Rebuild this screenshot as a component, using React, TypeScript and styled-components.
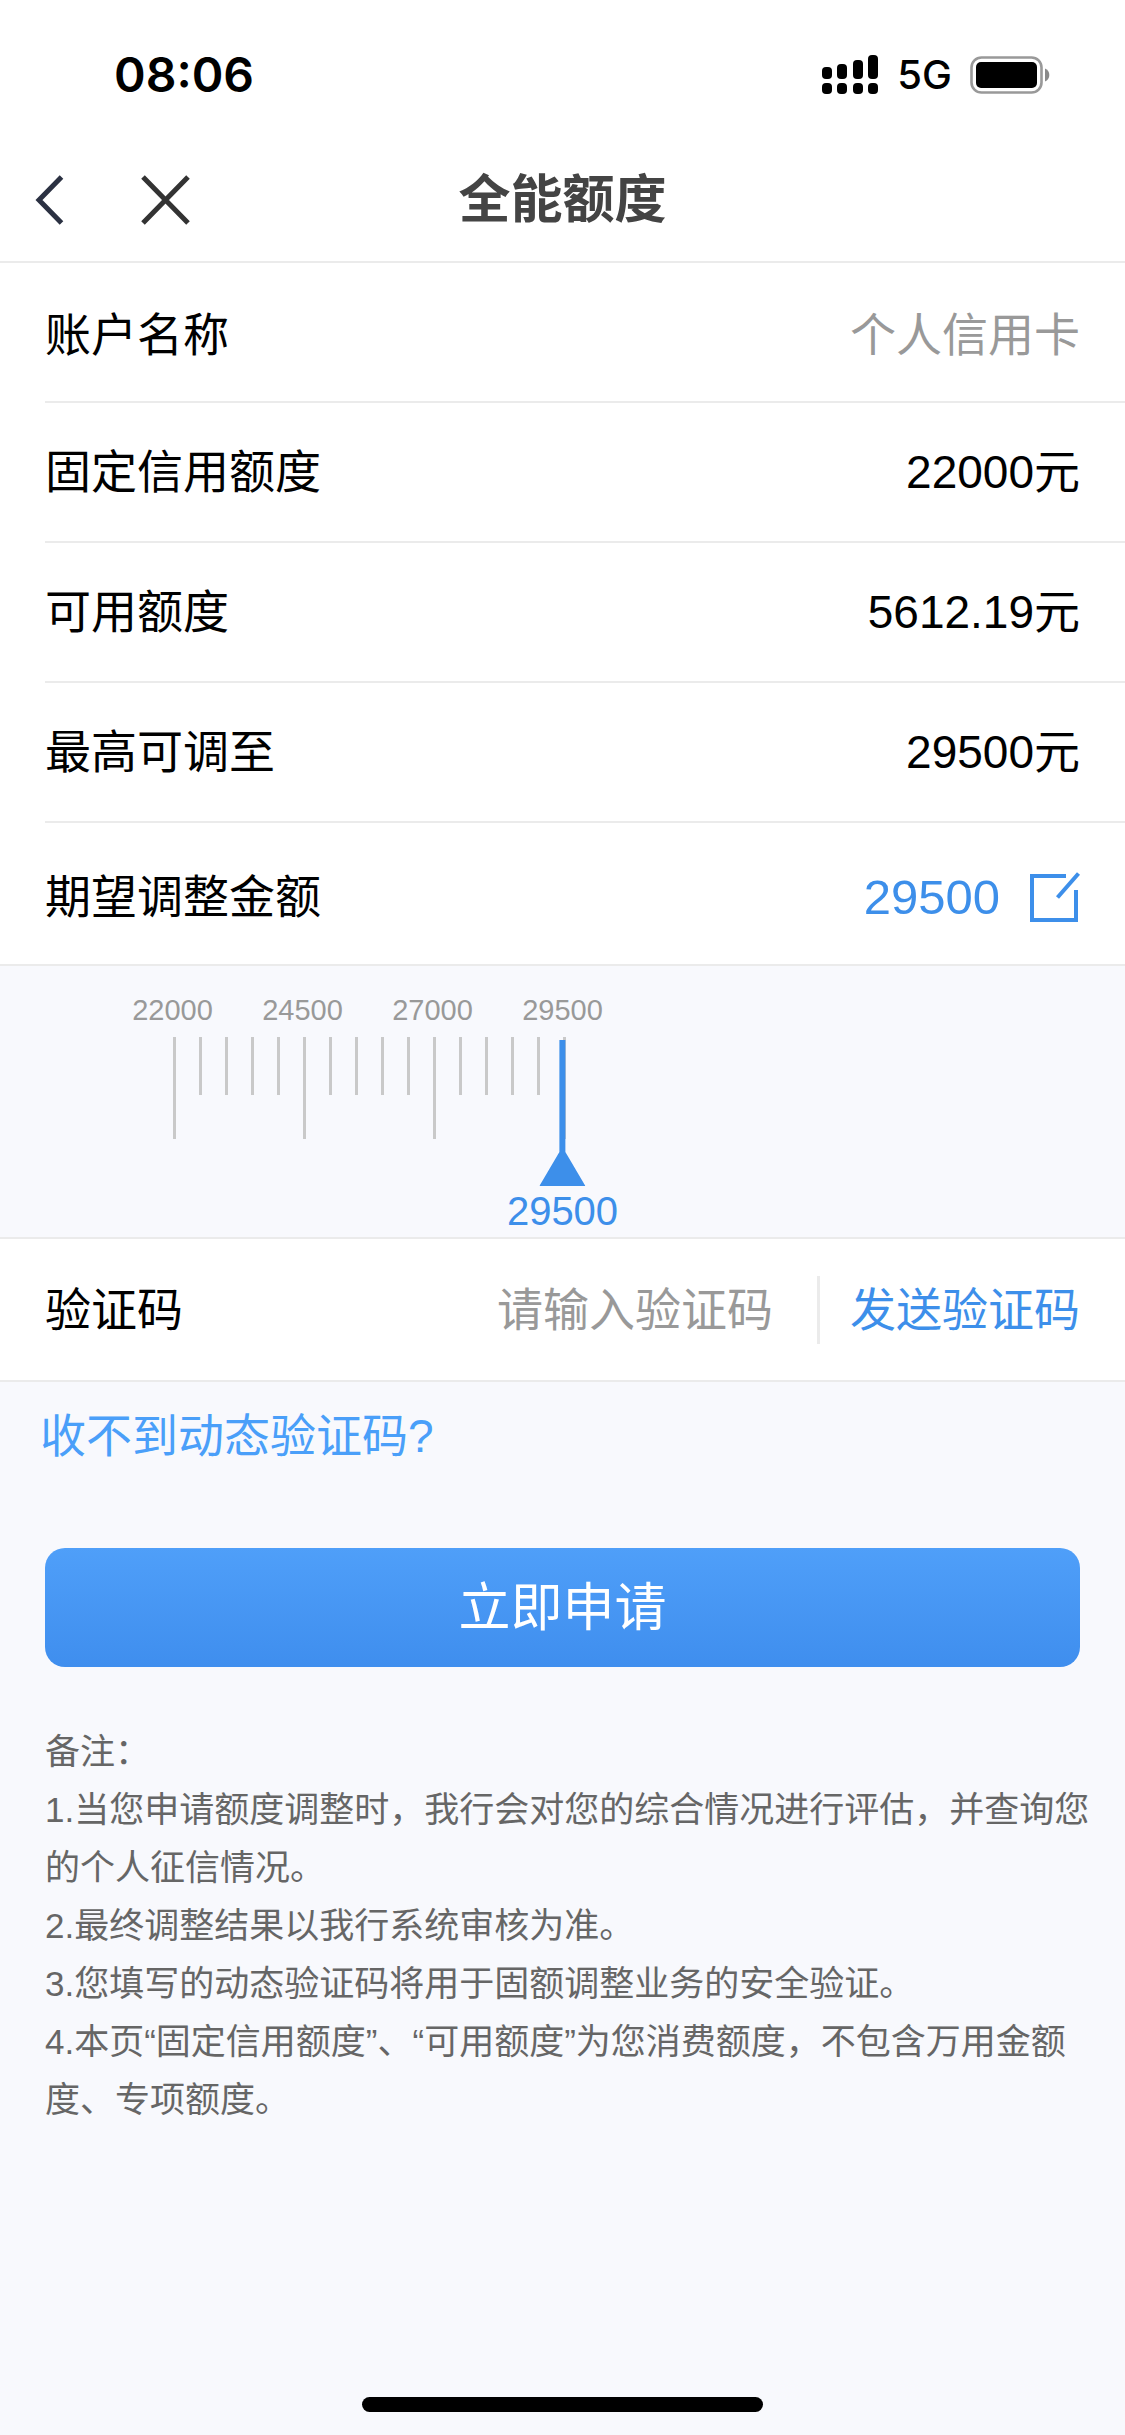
import React, { useState } from 'react';
import styled, { createGlobalStyle } from 'styled-components';

const color = {
  text: '#000000',
  muted: '#999999',
  note: '#666666',
  line: '#ebebeb',
  page: '#f8f9fd',
  blue: '#3d8fea',
  link: '#4a9ff9',
};

const MIN = 22000;
const MAX = 29500;
const STEP = 500;
const TICK = 26;
const TICKS_PER_LABEL = 5;

const GlobalStyle = createGlobalStyle`
  *, *::before, *::after { box-sizing: border-box; }
  html, body { margin: 0; background: ${color.page}; }
  body, button, input {
    font-family: "Liberation Sans", "Noto Sans CJK SC", sans-serif;
    font-size: 46px;
    line-height: 60px;
    color: ${color.text};
  }
  button {
    border: 0;
    padding: 0;
    background: none;
    cursor: pointer;
  }
`;

const Screen = styled.div`
  display: flex;
  flex-direction: column;
  min-height: 100vh;
`;

const StatusBar = styled.div`
  display: flex;
  align-items: center;
  justify-content: space-between;
  height: 138px;
  padding: 12px 75px 0 114px;
  background: #ffffff;
  font-family: Inter, sans-serif;
`;

const Clock = styled.time`
  font-size: 48px;
  font-weight: 600;
`;

const StatusIcons = styled.div`
  display: flex;
  align-items: center;
  gap: 18px;
`;

const Network = styled.span`
  font-size: 40px;
  font-weight: 500;
`;

const NavBar = styled.header`
  display: grid;
  grid-template-columns: 1fr auto 1fr;
  align-items: center;
  height: 125px;
  padding: 0 32px;
  border-bottom: 2px solid ${color.line};
  background: #ffffff;
`;

const NavActions = styled.div`
  display: flex;
  gap: 70px;
`;

const IconButton = styled.button`
  display: flex;
`;

const Title = styled.h1`
  margin: 0;
  font-size: 52px;
  font-weight: 700;
  color: #444444;
`;

const Details = styled.dl`
  margin: 0;
  background: #ffffff;
`;

const Row = styled.div`
  display: flex;
  align-items: center;
  justify-content: space-between;
  height: 140px;
  margin-left: 45px;
  padding-right: 45px;
  border-bottom: 2px solid ${color.line};
  &:first-child { padding-top: 6px; }
`;

const WideRow = styled.div<{ $low?: boolean }>`
  display: flex;
  align-items: center;
  height: 143px;
  padding: ${({ $low }) => ($low ? '6px' : '0')} 45px 0;
  border-bottom: 2px solid ${color.line};
  background: #ffffff;
`;

const Term = styled.dt``;

const Value = styled.dd<{ $muted?: boolean }>`
  margin: 0;
  color: ${({ $muted }) => ($muted ? color.muted : color.text)};
`;

const Amount = styled.output`
  margin: 0 30px 0 auto;
  font-size: 49px;
  color: ${color.blue};
`;

const Ruler = styled.section`
  position: relative;
  height: 273px;
  padding-top: 28px;
  border-bottom: 2px solid ${color.line};
  overflow: hidden;
`;

const ScaleLabels = styled.div`
  display: flex;
  color: ${color.muted};
  font-size: 29px;
  line-height: 32px;
`;

const ScaleLabel = styled.span`
  flex: none;
  width: ${TICK * TICKS_PER_LABEL}px;
  text-align: center;
`;

const Ticks = styled.div`
  display: flex;
  margin-top: 11px;
`;

const Tick = styled.i<{ $major: boolean }>`
  flex: none;
  width: ${TICK}px;
  height: ${({ $major }) => ($major ? 102 : 58)}px;
  border-left: 3px solid #c9c9c9;
`;

const Marker = styled.div`
  position: absolute;
  top: 74px;
  left: 50%;
  display: flex;
  flex-direction: column;
  align-items: center;
  transform: translateX(-50%);
  color: ${color.blue};
  font-size: 40px;
  line-height: 50px;
`;

const Range = styled.input`
  position: absolute;
  inset: 0;
  width: 100%;
  height: 100%;
  margin: 0;
  opacity: 0;
  cursor: pointer;
`;

const CodeInput = styled.input`
  flex: 1;
  min-width: 0;
  margin-left: 30px;
  padding: 0;
  border: 0;
  outline: 0;
  background: none;
  text-align: right;
  &::placeholder {
    color: ${color.muted};
    opacity: 1;
  }
`;

const Divider = styled.span`
  width: 3px;
  height: 68px;
  margin: 0 30px 0 44px;
  background: ${color.line};
`;

const SendButton = styled.button`
  color: ${color.blue};
`;

const HelpLink = styled.a`
  align-self: flex-start;
  margin: 24px 0 0 40px;
  color: ${color.link};
  text-decoration: none;
`;

const ApplyButton = styled.button`
  height: 119px;
  margin: 82px 45px 0;
  border-radius: 20px;
  background: linear-gradient(#4f9ff9, #3f8eee);
  color: #ffffff;
  font-size: 52px;
`;

const Notes = styled.section`
  padding: 56px 30px 0 45px;
  color: ${color.note};
  font-size: 35px;
  line-height: 58px;
`;

const NoteLine = styled.p`
  margin: 0;
`;

const HomeIndicator = styled.div`
  width: 401px;
  height: 15px;
  margin: auto auto 23px;
  border-radius: 8px;
  background: #000000;
`;

const SignalIcon = () => (
  <svg width="57" height="40" viewBox="0 0 57 40" aria-hidden="true">
    <rect x="0" y="12" width="10" height="12" rx="4" />
    <rect x="15" y="9" width="10" height="15" rx="4" />
    <rect x="31" y="5" width="10" height="19" rx="4" />
    <rect x="46" y="0" width="10" height="24" rx="4" />
    <rect x="0" y="28" width="10" height="11" rx="4" />
    <rect x="15" y="28" width="10" height="11" rx="4" />
    <rect x="31" y="28" width="10" height="11" rx="4" />
    <rect x="46" y="28" width="10" height="11" rx="4" />
  </svg>
);

const BatteryIcon = () => (
  <svg width="80" height="38" viewBox="0 0 80 38" aria-hidden="true">
    <rect x="1.5" y="1.5" width="70" height="35" rx="10" fill="none" stroke="#999" strokeWidth="2.6" />
    <rect x="6" y="6" width="61" height="26" rx="5" />
    <path d="M75 12.5c2.700 1 4.300 3.500 4.300 6.500s-1.600 5.500-4.300 6.500z" fill="#8a8a8a" />
  </svg>
);

const BackIcon = () => (
  <svg width="36" height="52" viewBox="0 0 36 52" fill="none" stroke="#2b3142" strokeWidth="5" aria-hidden="true">
    <path d="M29.500 3 7 26l22.500 23" />
  </svg>
);

const CloseIcon = () => (
  <svg width="52" height="52" viewBox="0 0 52 52" fill="none" stroke="#333" strokeWidth="5" aria-hidden="true">
    <path d="M5 3 50 49M50 3 5 49" />
  </svg>
);

const EditIcon = () => (
  <svg width="50" height="50" viewBox="0 0 50 50" fill="none" stroke={color.blue} strokeWidth="4" aria-hidden="true">
    <path d="M36 4H2v44h44V18" />
    <path d="M27.500 25.500 48.500 1.500" />
  </svg>
);

const details = [
  { label: '账户名称', value: '个人信用卡', muted: true },
  { label: '固定信用额度', value: '22000元' },
  { label: '可用额度', value: '5612.19元' },
  { label: '最高可调至', value: '29500元' },
];

const notes = [
  '备注：',
  '1.当您申请额度调整时，我行会对您的综合情况进行评估，并查询您的个人征信情况。',
  '2.最终调整结果以我行系统审核为准。',
  '3.您填写的动态验证码将用于固额调整业务的安全验证。',
  '4.本页“固定信用额度”、“可用额度”为您消费额度，不包含万用金额度、专项额度。',
];

const steps = Array.from({ length: (MAX - MIN) / STEP + 1 }, (_, i) => MIN + i * STEP);
const isMajor = (i: number) => i % TICKS_PER_LABEL === 0;

export default function App() {
  const [amount, setAmount] = useState(MAX);
  const [code, setCode] = useState('');

  // The scale slides under the fixed marker, so its start depends on the amount.
  const shift = ((amount - MIN) / STEP) * TICK;
  const halfLabel = (TICK * TICKS_PER_LABEL) / 2;

  return (
    <Screen>
      <GlobalStyle />
      <StatusBar>
        <Clock>08:06</Clock>
        <StatusIcons>
          <SignalIcon />
          <Network>5G</Network>
          <BatteryIcon />
        </StatusIcons>
      </StatusBar>
      <NavBar>
        <NavActions>
          <IconButton type="button" aria-label="返回"><BackIcon /></IconButton>
          <IconButton type="button" aria-label="关闭"><CloseIcon /></IconButton>
        </NavActions>
        <Title>全能额度</Title>
      </NavBar>

      <Details>
        {details.map((d) => (
          <Row key={d.label}>
            <Term>{d.label}</Term>
            <Value $muted={d.muted}>{d.value}</Value>
          </Row>
        ))}
      </Details>
      <WideRow $low>
        <label htmlFor="amount">期望调整金额</label>
        <Amount htmlFor="amount">{amount}</Amount>
        <IconButton type="button" aria-label="修改金额"><EditIcon /></IconButton>
      </WideRow>

      <Ruler>
        <ScaleLabels style={{ marginLeft: `calc(50% - ${shift + halfLabel}px)` }}>
          {steps.filter((_, i) => isMajor(i)).map((v) => (
            <ScaleLabel key={v}>{v}</ScaleLabel>
          ))}
        </ScaleLabels>
        <Ticks style={{ marginLeft: `calc(50% - ${shift}px)` }}>
          {steps.map((v, i) => (
            <Tick key={v} $major={isMajor(i)} />
          ))}
        </Ticks>
        <Marker>
          <svg width="46" height="146" viewBox="0 0 46 146" fill={color.blue} aria-hidden="true">
            <path d="M20 0h6v112l20 34H0l20-34z" />
          </svg>
          <span>{amount}</span>
        </Marker>
        <Range
          id="amount"
          type="range"
          min={MIN}
          max={MAX}
          step={STEP}
          value={amount}
          onChange={(e) => setAmount(Number(e.target.value))}
        />
      </Ruler>

      <WideRow>
        <label htmlFor="code">验证码</label>
        <CodeInput
          id="code"
          type="text"
          inputMode="numeric"
          placeholder="请输入验证码"
          value={code}
          onChange={(e) => setCode(e.target.value)}
        />
        <Divider />
        <SendButton type="button">发送验证码</SendButton>
      </WideRow>
      <HelpLink href="#help">收不到动态验证码?</HelpLink>
      <ApplyButton type="button">立即申请</ApplyButton>
      <Notes>
        {notes.map((n) => (
          <NoteLine key={n}>{n}</NoteLine>
        ))}
      </Notes>
      <HomeIndicator />
    </Screen>
  );
}
